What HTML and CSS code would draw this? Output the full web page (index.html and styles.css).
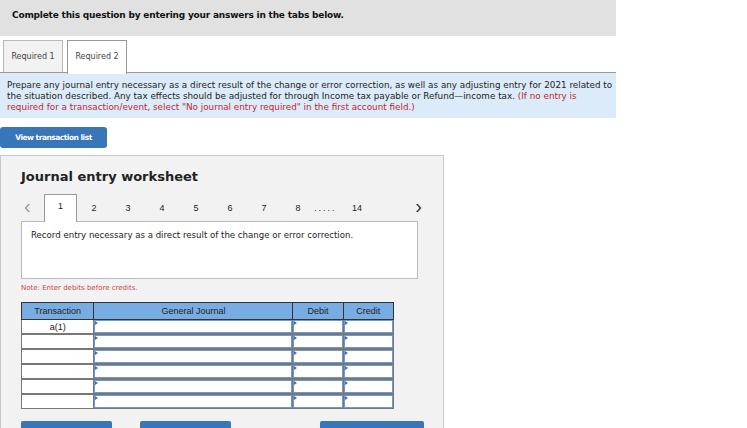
FILE: index.html
```html
<!DOCTYPE html>
<html lang="en">
<head>
    <meta charset="UTF-8">
    <title>Journal entry worksheet</title>
    <link rel="stylesheet" href="styles.css">
</head>
<body>
    <div class="question">
        <div class="top-bar">Complete this question by entering your answers in the tabs below.</div>
        <div class="tabs">
            <div class="tab">Required 1</div>
            <div class="tab active">Required 2</div>
        </div>
        <div class="instructions">
            Prepare any journal entry necessary as a direct result of the change or error correction, as well as any adjusting entry for 2021 related to the situation described. Any tax effects should be adjusted for through Income tax payable or Refund&mdash;income tax. <span class="red">(If no entry is required for a transaction/event, select "No journal entry required" in the first account field.)</span>
        </div>
        <button class="view-button">View transaction list</button>

        <div class="worksheet">
            <div class="ws-title">Journal entry worksheet</div>
            <div class="pager">
                <span class="arrow left">&lsaquo;</span>
                <span class="page current">1</span>
                <span class="page">2</span>
                <span class="page">3</span>
                <span class="page">4</span>
                <span class="page">5</span>
                <span class="page">6</span>
                <span class="page">7</span>
                <span class="page">8</span>
                <span class="dots">.....</span>
                <span class="page">14</span>
                <span class="arrow right">&rsaquo;</span>
            </div>
            <div class="entry-box">Record entry necessary as a direct result of the change or error correction.</div>
            <div class="note">Note: Enter debits before credits.</div>

            <table class="journal">
                <thead>
                    <tr>
                        <th class="col-tr">Transaction</th>
                        <th class="col-gj">General Journal</th>
                        <th class="col-amt">Debit</th>
                        <th class="col-amt">Credit</th>
                    </tr>
                </thead>
                <tbody>
                    <tr>
                        <td class="tr-cell">a(1)</td>
                        <td><div class="field"></div></td>
                        <td><div class="field"></div></td>
                        <td><div class="field"></div></td>
                    </tr>
                    <tr>
                        <td class="tr-cell"></td>
                        <td><div class="field"></div></td>
                        <td><div class="field"></div></td>
                        <td><div class="field"></div></td>
                    </tr>
                    <tr>
                        <td class="tr-cell"></td>
                        <td><div class="field"></div></td>
                        <td><div class="field"></div></td>
                        <td><div class="field"></div></td>
                    </tr>
                    <tr>
                        <td class="tr-cell"></td>
                        <td><div class="field"></div></td>
                        <td><div class="field"></div></td>
                        <td><div class="field"></div></td>
                    </tr>
                    <tr>
                        <td class="tr-cell"></td>
                        <td><div class="field"></div></td>
                        <td><div class="field"></div></td>
                        <td><div class="field"></div></td>
                    </tr>
                    <tr>
                        <td class="tr-cell"></td>
                        <td><div class="field"></div></td>
                        <td><div class="field"></div></td>
                        <td><div class="field"></div></td>
                    </tr>
                </tbody>
            </table>

            <div class="ws-buttons">
                <button class="ws-btn btn-record">Record entry</button>
                <button class="ws-btn btn-clear">Clear entry</button>
                <button class="ws-btn btn-view">View general journal</button>
            </div>
        </div>
    </div>
</body>
</html>
```

FILE: styles.css
```css
body {
    margin: 0;
    padding: 0;
    background: #fff;
    font-family: "DejaVu Sans", Verdana, sans-serif;
    color: #222;
}
.question {
    width: 616px;
}
.top-bar {
    background-color: #e1e1e1;
    height: 36px;
    line-height: 30px;
    padding-left: 12px;
    font-size: 9px;
    letter-spacing: -0.2px;
    font-weight: bold;
    color: #111;
}
.tabs {
    display: flex;
    gap: 4px;
    padding: 4px 0 0 3px;
    height: 32px;
}
.tab {
    width: 58px;
    border: 1px solid #b8b8b8;
    border-bottom: none;
    background: #f2f2f2;
    font-size: 8px;
    color: #444;
    text-align: center;
    line-height: 32px;
}
.tab.active {
    background: #fff;
    border-color: #999;
    position: relative;
    z-index: 1;
    height: 33px;
}
.instructions {
    border-top: 1px solid #999;
    background-color: #dcebf9;
    padding: 7px 3px 5px 7px;
    font-size: 8.8px;
    line-height: 11px;
    color: #222;
}
.red {
    color: #c0272d;
}
.view-button {
    display: block;
    margin-top: 9px;
    width: 107px;
    height: 21px;
    border: none;
    border-radius: 3px;
    background-color: #3975b9;
    color: #fff;
    font-family: "DejaVu Sans", Verdana, sans-serif;
    font-size: 7.5px;
    font-weight: bold;
    letter-spacing: -0.5px;
    padding: 0;
}
.worksheet {
    margin-top: 7px;
    width: 403px;
    height: 300px;
    background-color: #f2f2f2;
    border: 1px solid #c8c8c8;
    padding: 0 19px 0 20px;
}
.ws-title {
    font-size: 13px;
    font-weight: bold;
    color: #222;
    margin-top: 13px;
    height: 20px;
}
.pager {
    display: flex;
    align-items: flex-end;
    height: 26px;
    margin-top: 6px;
    font-family: "Liberation Sans", Arial, sans-serif;
    font-size: 9px;
    color: #222;
}
.pager .arrow {
    font-size: 20px;
    color: #999;
    width: 23px;
    line-height: 20px;
    padding-bottom: 5px;
    padding-left: 3px;
    box-sizing: border-box;
}
.pager .arrow.right {
    color: #333;
    margin-left: auto;
    width: auto;
    padding-right: 2px;
}
.pager .page {
    width: 34px;
    text-align: center;
    line-height: 22px;
    padding-bottom: 2px;
}
.pager .page.current {
    background: #fff;
    border: 1px solid #999;
    border-bottom: none;
    width: 33px;
    box-sizing: border-box;
    line-height: 22px;
    position: relative;
    z-index: 1;
    margin-bottom: -1px;
    height: 28px;
}
.pager .dots {
    width: 20px;
    letter-spacing: 2px;
    line-height: 22px;
    padding-bottom: 2px;
    margin-left: -1px;
    margin-right: 6px;
}
.entry-box {
    background: #fff;
    border: 1px solid #bbb;
    height: 48px;
    width: 376px;
    padding: 8px 10px 0 9px;
    font-size: 8.6px;
    color: #222;
}
.note {
    font-size: 7px;
    color: #c9464a;
    margin-top: 5px;
    height: 10px;
}
.journal {
    margin-top: 8px;
    border-collapse: collapse;
    width: 373px;
    font-family: "Liberation Sans", Arial, sans-serif;
    font-size: 9px;
}
.journal th {
    background-color: #78ade3;
    border: 1px solid #333;
    font-weight: normal;
    color: #222;
    height: 16px;
    padding: 0;
}
.journal .col-tr {
    width: 71px;
}
.journal .col-gj {
    width: 197px;
}
.journal .col-amt {
    width: 49px;
}
.journal td {
    border: 1px solid #777;
    border-top-width: 2px;
    background: #fff;
    padding: 0;
    height: 13px;
}
.journal tbody tr:first-child td {
    border-top-width: 1px;
}
.journal .tr-cell {
    text-align: center;
    color: #222;
    vertical-align: middle;
}
.field {
    height: 11px;
    border: 1px solid #6e98d2;
    position: relative;
}
.field::before {
    content: "";
    position: absolute;
    left: 0;
    top: 0;
    border-left: 3px solid #3d6fb8;
    border-top: 2px solid transparent;
    border-bottom: 2px solid transparent;
}
.ws-buttons {
    display: flex;
    margin-top: 12px;
}
.ws-btn {
    height: 22px;
    border: none;
    border-radius: 2px;
    background-color: #3975b9;
    color: #fff;
    font-size: 9px;
    padding: 0;
}
.btn-record {
    width: 91px;
}
.btn-clear {
    width: 92px;
    margin-left: 28px;
}
.btn-view {
    width: 104px;
    margin-left: 89px;
}
```
